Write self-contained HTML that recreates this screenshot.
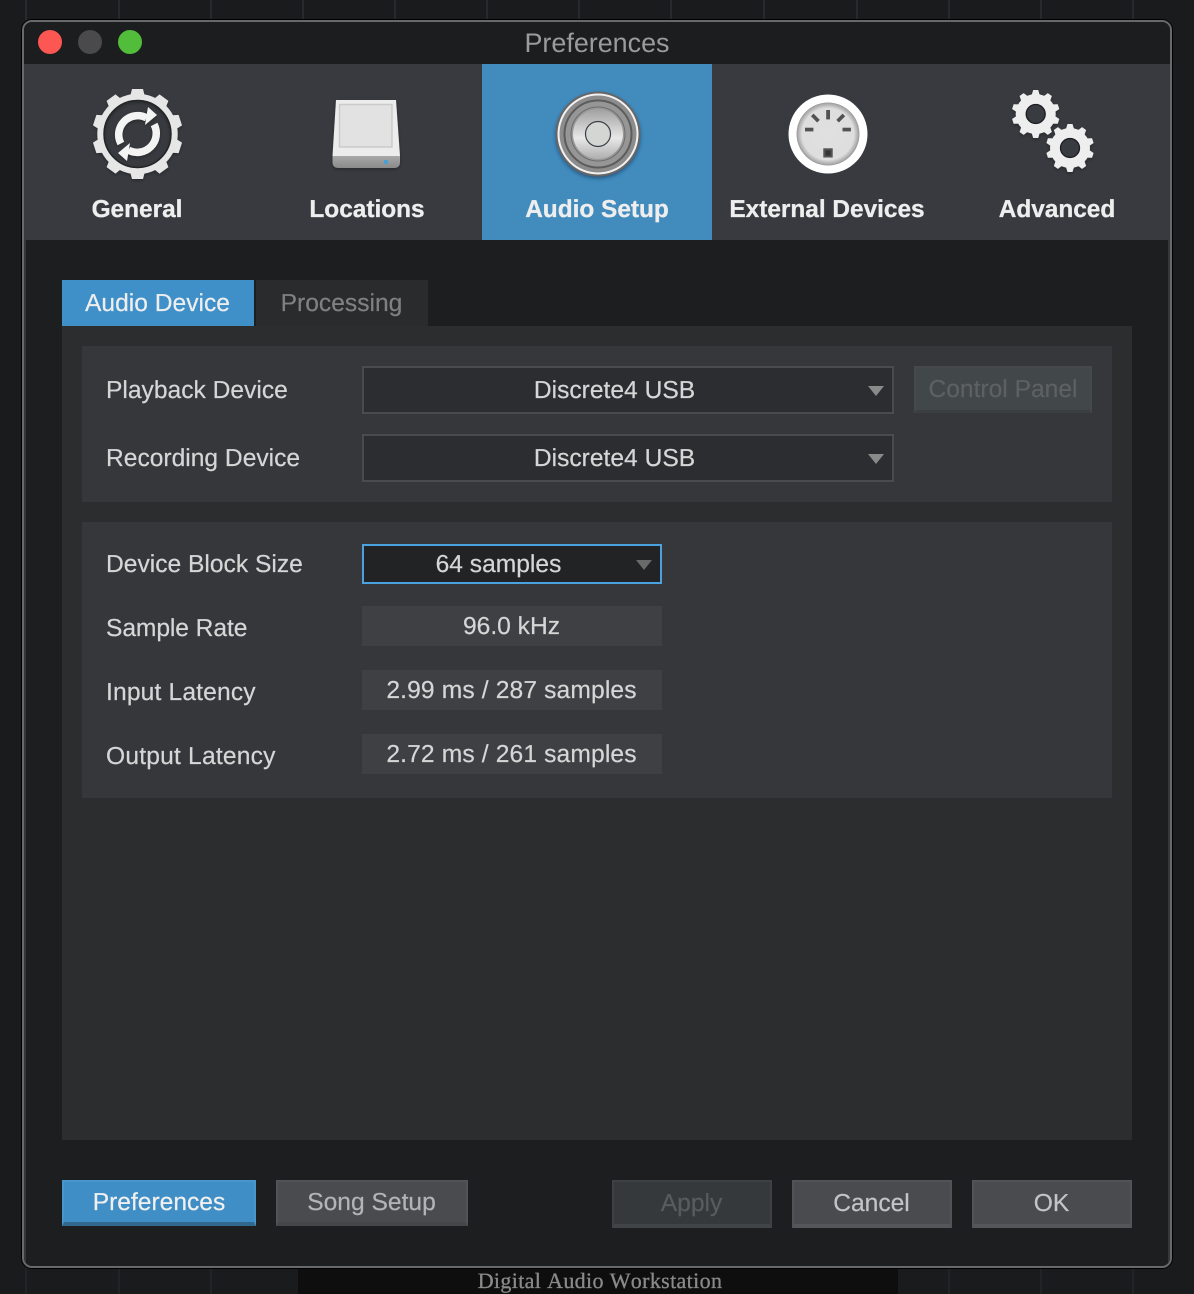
<!DOCTYPE html>
<html><head><meta charset="utf-8"><style>
html,body{margin:0;padding:0;background:#1a1b1d}
body{position:relative;width:1194px;height:1294px;overflow:hidden;font-family:"Liberation Sans",sans-serif;text-rendering:geometricPrecision;font-kerning:none}
div{position:absolute;box-sizing:border-box}
.l{white-space:nowrap;font-size:24.6px;line-height:40px;height:40px;color:#d6d6d6;-webkit-text-stroke:.2px #d6d6d6}
.c{white-space:nowrap;font-size:24.6px;line-height:40px;height:40px;text-align:center;color:#d6d6d6;-webkit-text-stroke:.2px currentColor}
.h{white-space:nowrap;font-size:24.4px;font-weight:bold;line-height:40px;height:40px;text-align:center;color:#eeeeee;top:189.5px;width:230px;-webkit-text-stroke:.3px #eeeeee}
.v{width:2px;background:#28292c}
.dd{left:362px;width:532px;height:48px;background:#2c2d30;border:2px solid #4a4b4e}
.ar{width:0;height:0;border-left:8px solid transparent;border-right:8px solid transparent;border-top:10px solid #8a8a8a}
.ro{left:362px;width:300px;height:40px;background:#3f4044}
.b{height:48px;width:160px;top:1180px;background:#4a4b4f;border:2px solid #525357;border-bottom:4px solid #55565a}
</style></head><body>
<div class="v" style="left:25px;top:0;height:20px"></div><div class="v" style="left:118px;top:0;height:20px"></div><div class="v" style="left:210px;top:0;height:20px"></div><div class="v" style="left:302px;top:0;height:20px"></div><div class="v" style="left:394px;top:0;height:20px"></div><div class="v" style="left:486px;top:0;height:20px"></div><div class="v" style="left:578px;top:0;height:20px"></div><div class="v" style="left:670px;top:0;height:20px"></div><div class="v" style="left:763px;top:0;height:20px"></div><div class="v" style="left:856px;top:0;height:20px"></div><div class="v" style="left:948px;top:0;height:20px"></div><div class="v" style="left:1040px;top:0;height:20px"></div><div class="v" style="left:1132px;top:0;height:20px"></div>
<div class="v" style="left:25px;top:1268px;height:26px;background:#222326"></div><div class="v" style="left:118px;top:1268px;height:26px;background:#222326"></div><div class="v" style="left:210px;top:1268px;height:26px;background:#222326"></div><div class="v" style="left:948px;top:1268px;height:26px;background:#222326"></div><div class="v" style="left:1040px;top:1268px;height:26px;background:#222326"></div><div class="v" style="left:1132px;top:1268px;height:26px;background:#222326"></div>
<div style="left:298px;top:1268px;width:600px;height:26px;background:#0e0e0f"></div>
<div style="left:300px;top:1268px;width:600px;height:26px;line-height:26px;text-align:center;white-space:nowrap;font-family:'Liberation Serif',serif;font-size:22px;letter-spacing:.35px;color:#8a8a8a;-webkit-text-stroke:.3px #8a8a8a">Digital Audio Workstation</div>

<div style="left:22px;top:20px;width:1150px;height:1248px;border:2px solid #67696b;border-radius:10px;background:#1d1e20;box-shadow:0 0 0 1px #000;overflow:hidden">
 <div style="left:0;top:0;width:1146px;height:42px;background:#1c1d1f"></div>
 <div style="left:0;top:42px;width:1146px;height:176px;background:#383a3f"></div>
 <div style="left:0;top:218px;width:2px;height:1026px;background:#36373b"></div>
 <div style="left:1144px;top:218px;width:2px;height:1026px;background:#36373b"></div>
 <div style="left:458px;top:42px;width:230px;height:176px;background:#418bbd"></div>
</div>

<div style="left:38px;top:30px;width:24px;height:24px;border-radius:50%;background:#fc5753"></div>
<div style="left:78px;top:30px;width:24px;height:24px;border-radius:50%;background:#4a4a4c"></div>
<div style="left:118px;top:30px;width:24px;height:24px;border-radius:50%;background:#52bd3a"></div>
<div style="left:297px;top:23px;width:600px;height:40px;line-height:40px;text-align:center;font-size:26.9px;color:#9b9b9b;white-space:nowrap">Preferences</div>

<svg style="position:absolute;left:0;top:0" width="1194" height="260" viewBox="0 0 1194 260">
 <defs>
  <linearGradient id="cone" x1="0" y1="0" x2="0" y2="1"><stop offset="0" stop-color="#a0a0a0"/><stop offset=".58" stop-color="#e8e8e8"/><stop offset="1" stop-color="#aeaeae"/></linearGradient>
  <linearGradient id="dr" x1="0" y1="0" x2="0" y2="1"><stop offset="0" stop-color="#a8a8a8"/><stop offset="1" stop-color="#8a8a8a"/></linearGradient>
  <radialGradient id="din" cx=".5" cy=".5" r=".5"><stop offset="0" stop-color="#e0e0e0"/><stop offset=".82" stop-color="#dedede"/><stop offset="1" stop-color="#9a9a9a"/></radialGradient>
  <filter id="sd" x="-20%" y="-20%" width="140%" height="140%"><feDropShadow dx="0" dy="1.5" stdDeviation="1.5" flood-color="#000" flood-opacity=".3"/></filter>
  <filter id="sp" x="-20%" y="-20%" width="140%" height="140%"><feDropShadow dx="0" dy="2" stdDeviation="1.8" flood-color="#103050" flood-opacity=".55"/></filter>
 </defs>
 <!-- General gear -->
 <g transform="translate(137.5 134)" filter="url(#sd)" fill="#e6e6e6">
  <circle r="37.2" fill="none" stroke="#e6e6e6" stroke-width="6"/>
  <circle r="33.4" fill="none" stroke="#242528" stroke-width="1.4"/>
  <path d="M-7.5 -37L-5.5 -45H5.5L7.5 -37Z"/>
  <path d="M-7.5 -37L-5.5 -45H5.5L7.5 -37Z" transform="rotate(36)"/>
  <path d="M-7.5 -37L-5.5 -45H5.5L7.5 -37Z" transform="rotate(72)"/>
  <path d="M-7.5 -37L-5.5 -45H5.5L7.5 -37Z" transform="rotate(108)"/>
  <path d="M-7.5 -37L-5.5 -45H5.5L7.5 -37Z" transform="rotate(144)"/>
  <path d="M-7.5 -37L-5.5 -45H5.5L7.5 -37Z" transform="rotate(180)"/>
  <path d="M-7.5 -37L-5.5 -45H5.5L7.5 -37Z" transform="rotate(216)"/>
  <path d="M-7.5 -37L-5.5 -45H5.5L7.5 -37Z" transform="rotate(252)"/>
  <path d="M-7.5 -37L-5.5 -45H5.5L7.5 -37Z" transform="rotate(288)"/>
  <path d="M-7.5 -37L-5.5 -45H5.5L7.5 -37Z" transform="rotate(324)"/>
  <path d="M-16.6 9.5A19 19 0 0 1 9 -16.2" fill="none" stroke="#f4f4f4" stroke-width="7.5"/>
  <path d="M16.6 -9.5A19 19 0 0 1 -9 16.2" fill="none" stroke="#f4f4f4" stroke-width="7.5"/>
  <path d="M10.5 -27L19.5 -19L7.5 -9Z" fill="#f4f4f4"/>
  <path d="M-10.5 27L-19.5 19L-7.5 9Z" fill="#f4f4f4"/>
 </g>
 <!-- Locations drive -->
 <g filter="url(#sd)">
  <path d="M336 100H396L400 156H332.500Z" fill="#ececec"/>
  <path d="M332.500 156H400V162Q400 168 394 168H338.500Q332.500 168 332.500 162Z" fill="url(#dr)"/>
 </g>
 <rect x="339.500" y="104.500" width="52.500" height="42.500" fill="#e2e2e2" stroke="#cbcbcb" stroke-width="1.500"/>
 <rect x="384" y="160" width="4" height="4" fill="#4aa0d0"/>
 <!-- Speaker -->
 <g transform="translate(598 134)">
  <circle r="42.500" fill="#666" filter="url(#sp)"/>
  <circle r="39.500" fill="#8c8c8c" stroke="#f2f2f2" stroke-width="2"/>
  <circle r="33.500" fill="#969696" stroke="#5c5c5c" stroke-width="2"/>
  <circle r="27" fill="#989898" stroke="#6e6e6e" stroke-width="1"/>
  <circle r="25" fill="url(#cone)"/>
  <circle r="12.500" fill="#d4d6d4" stroke="#3a3f48" stroke-width="1.200"/>
 </g>
 <!-- MIDI -->
 <circle cx="828" cy="134" r="39.500" fill="#fff"/>
 <circle cx="828" cy="134" r="31.500" fill="url(#din)"/>
 <g fill="#525252">
  <rect x="826.200" y="110" width="3.800" height="9.400"/>
  <rect x="805" y="127.700" width="8.400" height="3.700"/>
  <rect x="842.500" y="127.700" width="8.400" height="3.700"/>
  <rect x="811" y="116.200" width="8.800" height="3.700" transform="rotate(45 815.400 118)"/>
  <rect x="836.300" y="116.200" width="8.800" height="3.700" transform="rotate(-45 840.700 118)"/>
  <rect x="823.300" y="148.300" width="9.400" height="9.200"/>
 </g>
 <rect x="825.500" y="150.500" width="5" height="5" fill="#333"/>
 <!-- Advanced gears -->
 <g transform="translate(1035.700 114)" fill="#eeeeee" filter="url(#sd)">
  <circle r="20"/>
  <path d="M-4 -19L-2.500 -24H2.500L4 -19Z"/>
  <path d="M-4 -19L-2.500 -24H2.500L4 -19Z" transform="rotate(36)"/>
  <path d="M-4 -19L-2.500 -24H2.500L4 -19Z" transform="rotate(72)"/>
  <path d="M-4 -19L-2.500 -24H2.500L4 -19Z" transform="rotate(108)"/>
  <path d="M-4 -19L-2.500 -24H2.500L4 -19Z" transform="rotate(144)"/>
  <path d="M-4 -19L-2.500 -24H2.500L4 -19Z" transform="rotate(180)"/>
  <path d="M-4 -19L-2.500 -24H2.500L4 -19Z" transform="rotate(216)"/>
  <path d="M-4 -19L-2.500 -24H2.500L4 -19Z" transform="rotate(252)"/>
  <path d="M-4 -19L-2.500 -24H2.500L4 -19Z" transform="rotate(288)"/>
  <path d="M-4 -19L-2.500 -24H2.500L4 -19Z" transform="rotate(324)"/>
  <circle r="9.500" fill="#383a3f" stroke="#1c1d20" stroke-width="1.300"/>
 </g>
 <g transform="translate(1070 148)" fill="#eeeeee" filter="url(#sd)">
  <circle r="20"/>
  <path d="M-4 -19L-2.500 -24H2.500L4 -19Z"/>
  <path d="M-4 -19L-2.500 -24H2.500L4 -19Z" transform="rotate(36)"/>
  <path d="M-4 -19L-2.500 -24H2.500L4 -19Z" transform="rotate(72)"/>
  <path d="M-4 -19L-2.500 -24H2.500L4 -19Z" transform="rotate(108)"/>
  <path d="M-4 -19L-2.500 -24H2.500L4 -19Z" transform="rotate(144)"/>
  <path d="M-4 -19L-2.500 -24H2.500L4 -19Z" transform="rotate(180)"/>
  <path d="M-4 -19L-2.500 -24H2.500L4 -19Z" transform="rotate(216)"/>
  <path d="M-4 -19L-2.500 -24H2.500L4 -19Z" transform="rotate(252)"/>
  <path d="M-4 -19L-2.500 -24H2.500L4 -19Z" transform="rotate(288)"/>
  <path d="M-4 -19L-2.500 -24H2.500L4 -19Z" transform="rotate(324)"/>
  <circle r="9.500" fill="#383a3f" stroke="#1c1d20" stroke-width="1.300"/>
 </g>
</svg>

<div class="h" style="left:22px">General</div>
<div class="h" style="left:252px">Locations</div>
<div class="h" style="left:482px">Audio Setup</div>
<div class="h" style="left:712px">External Devices</div>
<div class="h" style="left:942px">Advanced</div>

<div style="left:62px;top:280px;width:192px;height:46px;background:#3f8fc8"></div>
<div style="left:256px;top:280px;width:172px;height:46px;background:#2a2b2d"></div>
<div class="c" style="left:62px;width:191px;top:283.500px;color:#eeeeee">Audio Device</div>
<div class="c" style="left:256px;width:171px;top:283.500px;color:#808080">Processing</div>

<div style="left:62px;top:326px;width:1070px;height:814px;background:#2c2d2f"></div>
<div style="left:82px;top:346px;width:1030px;height:156px;background:#36373b"></div>
<div style="left:82px;top:522px;width:1030px;height:276px;background:#36373b"></div>

<div class="l" style="left:106px;top:370.500px">Playback Device</div>
<div class="l" style="left:106px;top:438.500px">Recording Device</div>
<div class="dd" style="top:366px"></div>
<div class="dd" style="top:434px"></div>
<div class="c" style="left:362px;width:505px;top:370.500px">Discrete4 USB</div>
<div class="c" style="left:362px;width:505px;top:438.500px">Discrete4 USB</div>
<div class="ar" style="left:868px;top:386px"></div>
<div class="ar" style="left:868px;top:454px"></div>
<div style="left:914px;top:366px;width:178px;height:47px;background:#42474a;border:2px solid #46494c;border-bottom:3px solid #3b3e42"></div>
<div class="c" style="left:914px;width:178px;top:369.500px;color:#5d6163">Control Panel</div>

<div class="l" style="left:106px;top:544.500px">Device Block Size</div>
<div class="l" style="left:106px;top:608.500px;letter-spacing:-.08px">Sample Rate</div>
<div class="l" style="left:106px;top:672.500px;letter-spacing:.16px">Input Latency</div>
<div class="l" style="left:106px;top:736.500px;letter-spacing:.2px">Output Latency</div>
<div style="left:362px;top:544px;width:300px;height:40px;background:#222325;border:2px solid #4aa3df"></div>
<div class="c" style="left:362px;width:273px;top:544.500px">64 samples</div>
<div class="ar" style="left:636px;top:560px;border-top-color:#6a6a6a"></div>
<div class="ro" style="top:606px"></div><div class="ro" style="top:670px"></div><div class="ro" style="top:734px"></div>
<div class="c" style="left:362px;width:299px;top:606.500px">96.0 kHz</div>
<div class="c" style="left:362px;width:299px;top:670.500px;letter-spacing:.14px">2.99 ms / 287 samples</div>
<div class="c" style="left:362px;width:299px;top:734.500px;letter-spacing:.14px">2.72 ms / 261 samples</div>

<div class="b" style="left:62px;width:194px;height:46px;background:#3f8fc6;border:2px solid #4796cd;border-bottom:4px solid #33688e"></div>
<div class="c" style="left:62px;width:194px;top:1183px;color:#f0f0f0">Preferences</div>
<div class="b" style="left:276px;width:192px;height:46px;border-bottom-color:#454649"></div>
<div class="c" style="left:276px;width:191px;top:1183px;color:#b4b4b6">Song Setup</div>
<div class="b" style="left:612px;background:#36393c;border-color:#3e4144;border-bottom-color:#414447"></div>
<div class="c" style="left:612px;width:159px;top:1184px;color:#585c5f">Apply</div>
<div class="b" style="left:792px"></div>
<div class="c" style="left:792px;width:159px;top:1184px;color:#c4c4c6">Cancel</div>
<div class="b" style="left:972px"></div>
<div class="c" style="left:972px;width:159px;top:1184px;color:#c4c4c6">OK</div>
</body></html>
